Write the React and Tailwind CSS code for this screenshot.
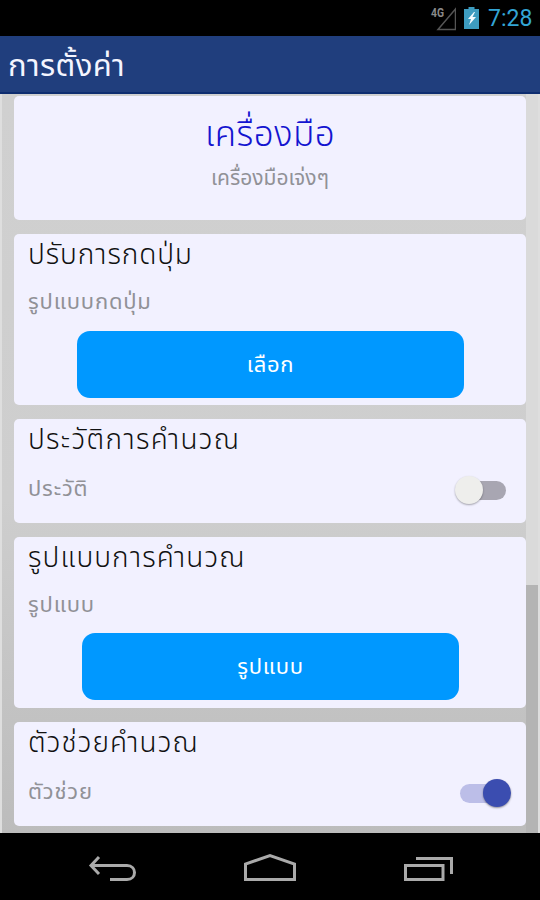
import clsx from 'clsx'

function StatusBar() {
  return (
    <div className="flex h-9 shrink-0 items-center justify-end bg-black pr-2">
      <svg width="27" height="26" viewBox="0 0 27 26" className="mt-0.5">
        <text x="2" y="11" fontSize="12" fontWeight="bold" fontFamily="Roboto" fill="#8a8a8a" textLength="13" lengthAdjust="spacingAndGlyphs">4G</text>
        <path d="M26.500 3 V23.500 H9 Z" fill="none" stroke="#555" strokeWidth="1.5" />
      </svg>
      <svg width="16" height="24" viewBox="0 0 16 24" className="ml-2">
        <path d="M4.500 1h6v2h4.500v20H0V3h4.500z" fill="#3d9cc0" />
        <path d="M10 6 L4 13 H7 L5 19 L12 11 H8.500 L11 6z" fill="#f4fbff" />
      </svg>
      <span className="ml-2 w-[44px] pt-0.5 font-[Roboto,sans-serif] text-[23px] leading-9 text-[#33a5d5]">7:28</span>
    </div>
  )
}

function Card({ title, label, className, titleClassName, toggle, children }) {
  return (
    <section className={clsx('shrink-0 rounded-[5px] bg-[#f2f1ff]', className)}>
      <h2 className={clsx('h-[42px] pl-3.5 text-[28px] leading-[44px] font-light text-[#111]', titleClassName)}>{title}</h2>
      <div className={clsx('flex justify-between pl-3.5', toggle && 'pt-0.5')}>
        <p className="h-[54px] text-[22px] leading-[54px] tracking-[0.8px] text-[#919197]">{label}</p>
        {toggle}
      </div>
      {children}
    </section>
  )
}

function Toggle({ on }) {
  return (
    <div className={clsx('mt-[13px] flex h-7 items-center', on ? 'mr-[15px]' : 'mr-5')}>
      {!on && <div className="z-10 -mr-3.5 size-7 rounded-full bg-[#eeeeec] shadow-[0_1px_2px_#0005]" />}
      <div className={clsx('h-[19px] w-[37px]', on ? 'rounded-l-full bg-[#bcbee8]' : 'rounded-r-full bg-[#a8a6b2]')} />
      {on && <div className="z-10 -ml-3.5 size-7 rounded-full bg-[#3b4db0] shadow-[0_1px_2px_#0006]" />}
    </div>
  )
}

function Button({ children, className }) {
  return (
    <button className={clsx('block h-[67px] rounded-[13px] bg-[#0098ff] pt-0.5 text-[22px] tracking-[0.7px] text-white', className)}>
      {children}
    </button>
  )
}

function NavBar() {
  return (
    <div className="flex h-[67px] shrink-0 items-center justify-between bg-black pt-1 pr-[86px] pl-[88px]">
      <svg width="49" height="32" viewBox="0 0 49 32" fill="none" stroke="#aaa" strokeWidth="3">
        <path d="M11 4 L3 12.500 L11 21 M3 12.500 H39 C49 12.500 49 26.500 39 26.500 H22" />
      </svg>
      <svg width="52" height="32" viewBox="0 0 52 32" fill="none" stroke="#aaa" strokeWidth="3">
        <path d="M1.500 26.500 V11 L26 2.500 L50.500 11 V26.500 Z" />
      </svg>
      <svg width="51" height="32" viewBox="0 0 51 32" fill="none" stroke="#aaa" strokeWidth="3">
        <path d="M2.500 12.500 H40 V26.500 H2.500 Z M13 5.500 H48.500 V21" />
      </svg>
    </div>
  )
}

export default function App() {
  return (
    <div className="flex h-[900px] w-[540px] flex-col overflow-hidden bg-black font-['Noto_Sans_Thai','Noto_Sans',sans-serif]">
      <StatusBar />
      <header className="flex h-[58px] shrink-0 items-center border-b-2 border-[#0e2d70] bg-[#203e7d] pt-1.5 pl-2">
        <h1 className="text-[31px] leading-[56px] tracking-[0.4px] text-[#f4f5ff]">การตั้งค่า</h1>
      </header>
      <main className="relative flex h-[739px] shrink-0 flex-col gap-3.5 overflow-hidden border-x-2 border-[#dedede] bg-linear-to-b from-[#d0d0d0] via-[#cecece] via-55% to-[#bcbcbc] px-3 pt-0.5">
        <div className="absolute top-0 right-0 h-[491px] w-3 bg-[#dadada]" />
        <div className="absolute top-[491px] right-0 bottom-0 w-3 bg-[#b4b4b4]" />
        <section className="h-[124px] shrink-0 rounded-[5px] bg-[#f2f1ff] text-center">
          <h2 className="pt-2.5 text-[35px] leading-[60px] font-light tracking-[0.4px] text-[#1414d0]">เครื่องมือ</h2>
          <p className="text-[21px] leading-[26px] text-[#919197]">เครื่องมือเจ่งๆ</p>
        </section>
        <Card title="ปรับการกดปุ่ม" label="รูปแบบกดปุ่ม" className="h-[171px]" titleClassName="tracking-[0.9px]">
          <Button className="mt-px ml-[63px] w-[387px]">เลือก</Button>
        </Card>
        <Card
          title="ประวัติการคำนวณ"
          label="ประวัติ"
          className="h-[104px]"
          titleClassName="tracking-[1.3px]"
          toggle={<Toggle />}
        />
        <Card title="รูปแบบการคำนวณ" label="รูปแบบ" className="h-[171px]" titleClassName="tracking-[1.1px]">
          <Button className="ml-[68px] w-[377px]">รูปแบบ</Button>
        </Card>
        <Card
          title="ตัวช่วยคำนวณ"
          label="ตัวช่วย"
          className="h-[104px]"
          titleClassName="tracking-[1.1px]"
          toggle={<Toggle on />}
        />
      </main>
      <NavBar />
    </div>
  )
}
